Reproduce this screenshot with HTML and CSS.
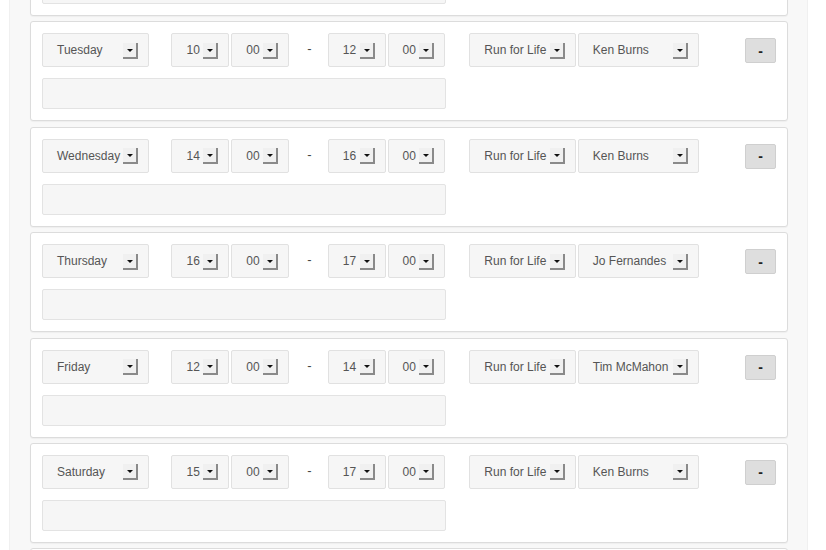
FILE: index.html
```html
<!DOCTYPE html>
<html>
<head>
<meta charset="utf-8">
<link rel="stylesheet" href="styles.css">
</head>
<body>
<div class="page">
  <div class="list">
    <div class="card">
      <div class="row"></div>
      <div class="note"></div>
    </div>
    <div class="card">
      <div class="row">
        <div class="sel day"><span>Tuesday</span><i class="arr"></i></div>
        <div class="sel num ml"><span>10</span><i class="arr"></i></div>
        <div class="sel num"><span>00</span><i class="arr"></i></div>
        <div class="dash">-</div>
        <div class="sel num"><span>12</span><i class="arr"></i></div>
        <div class="sel num"><span>00</span><i class="arr"></i></div>
        <div class="sel prog ml"><span>Run for Life</span><i class="arr"></i></div>
        <div class="sel coach"><span>Ken Burns</span><i class="arr"></i></div>
        <button class="rm">-</button>
      </div>
      <div class="note"></div>
    </div>
    <div class="card">
      <div class="row">
        <div class="sel day"><span>Wednesday</span><i class="arr"></i></div>
        <div class="sel num ml"><span>14</span><i class="arr"></i></div>
        <div class="sel num"><span>00</span><i class="arr"></i></div>
        <div class="dash">-</div>
        <div class="sel num"><span>16</span><i class="arr"></i></div>
        <div class="sel num"><span>00</span><i class="arr"></i></div>
        <div class="sel prog ml"><span>Run for Life</span><i class="arr"></i></div>
        <div class="sel coach"><span>Ken Burns</span><i class="arr"></i></div>
        <button class="rm">-</button>
      </div>
      <div class="note"></div>
    </div>
    <div class="card">
      <div class="row">
        <div class="sel day"><span>Thursday</span><i class="arr"></i></div>
        <div class="sel num ml"><span>16</span><i class="arr"></i></div>
        <div class="sel num"><span>00</span><i class="arr"></i></div>
        <div class="dash">-</div>
        <div class="sel num"><span>17</span><i class="arr"></i></div>
        <div class="sel num"><span>00</span><i class="arr"></i></div>
        <div class="sel prog ml"><span>Run for Life</span><i class="arr"></i></div>
        <div class="sel coach"><span>Jo Fernandes</span><i class="arr"></i></div>
        <button class="rm">-</button>
      </div>
      <div class="note"></div>
    </div>
    <div class="card">
      <div class="row">
        <div class="sel day"><span>Friday</span><i class="arr"></i></div>
        <div class="sel num ml"><span>12</span><i class="arr"></i></div>
        <div class="sel num"><span>00</span><i class="arr"></i></div>
        <div class="dash">-</div>
        <div class="sel num"><span>14</span><i class="arr"></i></div>
        <div class="sel num"><span>00</span><i class="arr"></i></div>
        <div class="sel prog ml"><span>Run for Life</span><i class="arr"></i></div>
        <div class="sel coach"><span>Tim McMahon</span><i class="arr"></i></div>
        <button class="rm">-</button>
      </div>
      <div class="note"></div>
    </div>
    <div class="card">
      <div class="row">
        <div class="sel day"><span>Saturday</span><i class="arr"></i></div>
        <div class="sel num ml"><span>15</span><i class="arr"></i></div>
        <div class="sel num"><span>00</span><i class="arr"></i></div>
        <div class="dash">-</div>
        <div class="sel num"><span>17</span><i class="arr"></i></div>
        <div class="sel num"><span>00</span><i class="arr"></i></div>
        <div class="sel prog ml"><span>Run for Life</span><i class="arr"></i></div>
        <div class="sel coach"><span>Ken Burns</span><i class="arr"></i></div>
        <button class="rm">-</button>
      </div>
      <div class="note"></div>
    </div>
    <div class="card">
      <div class="row"></div>
      <div class="note"></div>
    </div>
  </div>
</div>
</body>
</html>
```

FILE: styles.css
```css
html, body {
  margin: 0;
  padding: 0;
  background: #ffffff;
  overflow: hidden;
  height: 550px;
}
body {
  font-family: "Liberation Sans", Arial, sans-serif;
  font-size: 12px;
  color: #555555;
}
.page {
  margin-left: 9px;
  width: 799px;
  height: 700px;
  background: #f8f8f8;
  box-sizing: border-box;
  border-left: 1px solid #f0f0f0;
  border-right: 1px solid #f0f0f0;
  padding-left: 20px;
}
.list {
  margin-top: -84px;
  width: 758px;
}
.card {
  box-sizing: border-box;
  height: 100px;
  margin-bottom: 5.4px;
  background: #ffffff;
  border: 1px solid #dcdcdc;
  border-radius: 3px;
  box-shadow: 0 1px 1px rgba(0,0,0,0.04);
  padding: 11px;
}
.row {
  display: flex;
  align-items: flex-start;
  height: 34px;
}
.sel {
  box-sizing: border-box;
  height: 34px;
  display: flex;
  align-items: center;
  justify-content: space-between;
  background: #f6f6f6;
  border: 1px solid #e1e1e1;
  border-radius: 2px;
  padding: 0 10px 0 14px;
  color: #555555;
  white-space: nowrap;
}
.sel span {
  line-height: 14px;
}
.day { width: 108px; }
.num { width: 58px; margin-right: 2px; }
.ml { margin-left: 22px; }
.prog { width: 107px; margin-right: 2px; }
.coach { width: 122px; }
.arr {
  display: block;
  box-sizing: border-box;
  width: 15px;
  height: 16px;
  margin-top: 1px;
  background: #f0f0f0;
  border-right: 2px solid #8a8a8a;
  border-bottom: 2px solid #8a8a8a;
  position: relative;
  flex: none;
}
.arr::after {
  content: "";
  position: absolute;
  left: 4px;
  top: 6px;
  border-left: 3px solid transparent;
  border-right: 3px solid transparent;
  border-top: 3px solid #111111;
}
.dash {
  width: 37px;
  text-align: center;
  line-height: 32px;
  font-size: 13px;
  color: #444;
}
.rm {
  margin-left: 46px;
  margin-top: 5px;
  width: 31px;
  height: 25px;
  padding: 0;
  background: #dedede;
  border: 1px solid #cfcfcf;
  border-radius: 2px;
  font-family: "Liberation Sans", Arial, sans-serif;
  font-size: 14px;
  font-weight: bold;
  color: #222222;
  line-height: 20px;
}
.note {
  box-sizing: border-box;
  margin-top: 11px;
  width: 404px;
  height: 31px;
  background: #f6f6f6;
  border: 1px solid #e3e3e3;
  border-radius: 2px;
}
```
